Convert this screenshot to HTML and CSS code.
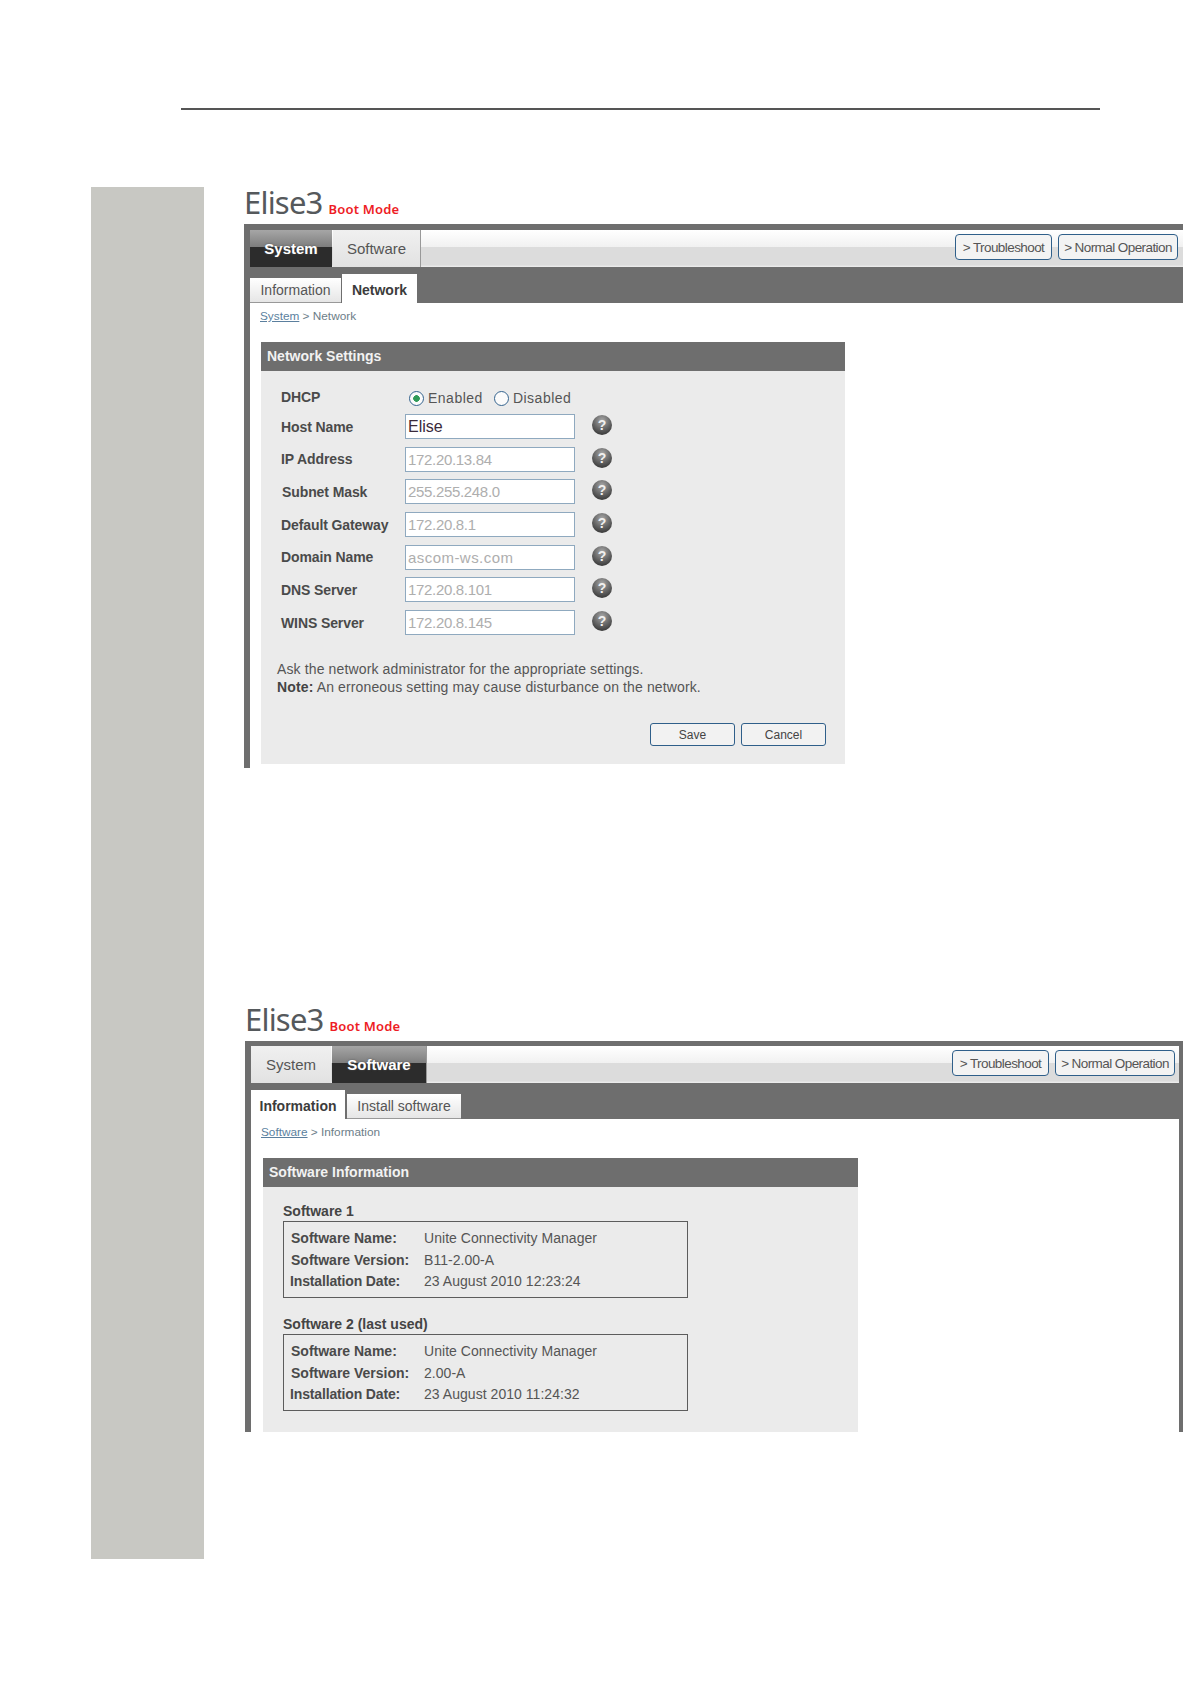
FILE: index.html
```html
<!DOCTYPE html>
<html lang="en">
<head>
<meta charset="utf-8">
<title>Elise3 Boot Mode</title>
<link rel="stylesheet" href="styles.css">
</head>
<body>
<hr class="rule">
<div class="layout">
  <aside class="sidebar"></aside>
  <main class="main">
    <section class="shot shot-one">
      <h2 class="brand"><span class="brand-name">Elise3</span><span class="brand-mode">Boot Mode</span></h2>
      <div class="frame">
        <div class="menubar">
          <a class="tab tab-active tab-system">System</a>
          <a class="tab tab-software tab-edge">Software</a>
          <div class="actions">
            <a class="action action-trouble">&gt; Troubleshoot</a>
            <a class="action action-normal">&gt; Normal Operation</a>
          </div>
        </div>
        <div class="subbar">
          <a class="subtab subtab-info">Information</a>
          <a class="subtab subtab-active subtab-net">Network</a>
        </div>
        <p class="crumb"><a class="crumb-link">System</a> &gt; Network</p>
        <div class="panel panel-net">
          <h3 class="panel-title">Network Settings</h3>
          <div class="panel-body">
            <div class="form">
              <span class="label label-dhcp">DHCP</span>
              <div class="radios">
                <span class="radio radio-on"></span><span class="radio-text">Enabled</span>
                <span class="radio radio-second"></span><span class="radio-text">Disabled</span>
              </div>
              <span></span>

              <span class="label">Host Name</span>
              <span class="field field-on">Elise</span>
              <span class="help">?</span>

              <span class="label">IP Address</span>
              <span class="field">172.20.13.84</span>
              <span class="help">?</span>

              <span class="label label-nudge">Subnet Mask</span>
              <span class="field">255.255.248.0</span>
              <span class="help">?</span>

              <span class="label">Default Gateway</span>
              <span class="field">172.20.8.1</span>
              <span class="help">?</span>

              <span class="label">Domain Name</span>
              <span class="field field-text">ascom-ws.com</span>
              <span class="help">?</span>

              <span class="label">DNS Server</span>
              <span class="field">172.20.8.101</span>
              <span class="help">?</span>

              <span class="label">WINS Server</span>
              <span class="field">172.20.8.145</span>
              <span class="help">?</span>
            </div>
            <p class="note">Ask the network administrator for the appropriate settings.<br><b>Note:</b> An erroneous setting may cause disturbance on the network.</p>
            <div class="form-buttons">
              <a class="button">Save</a>
              <a class="button">Cancel</a>
            </div>
          </div>
        </div>
      </div>
    </section>

    <section class="shot shot-two">
      <h2 class="brand"><span class="brand-name">Elise3</span><span class="brand-mode">Boot Mode</span></h2>
      <div class="frame frame-closed">
        <div class="menubar">
          <a class="tab tab-system2">System</a>
          <a class="tab tab-active tab-software2">Software</a>
          <div class="actions">
            <a class="action action-trouble">&gt; Troubleshoot</a>
            <a class="action action-normal">&gt; Normal Operation</a>
          </div>
        </div>
        <div class="subbar">
          <a class="subtab subtab-active subtab-info2">Information</a>
          <a class="subtab subtab-install">Install software</a>
        </div>
        <p class="crumb crumb-two"><a class="crumb-link">Software</a> &gt; Information</p>
        <div class="panel panel-soft">
          <h3 class="panel-title">Software Information</h3>
          <div class="panel-body panel-body-soft">
            <h4 class="group-title">Software 1</h4>
            <dl class="group">
              <dt class="key">Software Name:</dt><dd class="value">Unite Connectivity Manager</dd>
              <dt class="key">Software Version:</dt><dd class="value">B11-2.00-A</dd>
              <dt class="key key-out">Installation Date:</dt><dd class="value">23 August 2010 12:23:24</dd>
            </dl>
            <h4 class="group-title group-title-next">Software 2 (last used)</h4>
            <dl class="group">
              <dt class="key">Software Name:</dt><dd class="value">Unite Connectivity Manager</dd>
              <dt class="key">Software Version:</dt><dd class="value">2.00-A</dd>
              <dt class="key key-out">Installation Date:</dt><dd class="value">23 August 2010 11:24:32</dd>
            </dl>
          </div>
        </div>
      </div>
    </section>
  </main>
</div>
</body>
</html>
```
FILE: styles.css
```css
* { box-sizing: border-box; }
html, body { margin: 0; padding: 0; background: #fff; }
body { font-family: "Liberation Sans", Arial, sans-serif; color: #444; height: 1684px; overflow: hidden; }

.rule { margin: 108px 0 0 181px; width: 919px; height: 2px; border: 0; background: #555; }

.layout { display: flex; margin-top: 77px; padding-left: 91px; }
.sidebar { width: 113px; height: 1372px; background: #c8c8c3; flex: none; }
.main { flex: 1; min-width: 0; }

.shot-one { margin-left: 40px; width: 939px; }
.shot-two { margin-left: 41px; width: 938px; margin-top: 236px; }

.brand { margin: 0; height: 37px; display: flex; align-items: baseline; font-weight: 400; white-space: nowrap; }
.brand-name { font-family: "Noto Sans", sans-serif; font-size: 31px; line-height: 30px; color: #55595c; letter-spacing: -0.8px; }
.brand-mode { font-family: "Noto Sans", sans-serif; font-weight: 600; font-size: 13px; color: #ee1c25; margin-left: 6px; letter-spacing: 0.2px; }

.frame { border-top: 6px solid #6e6e6e; border-left: 6px solid #6e6e6e; height: 544px; background: #fff; }
.frame-closed { border-top-width: 5px; border-right: 4px solid #6e6e6e; height: 391px; }

.menubar { display: flex; height: 37px; background: linear-gradient(#fff 0, #f1f1f1 46%, #dcdcdc 47%, #dcdcdc 94%, #efefef 100%); }
.tab { display: flex; align-items: center; justify-content: center; font-size: 15px; color: #555; background: linear-gradient(#f0f0f0, #e2e2e2); }
.tab-active { color: #fff; font-weight: 700; background: linear-gradient(#a6a6a6 0, #7d7d7d 47%, #2c2c2c 47%, #2c2c2c 100%); text-shadow: 0 0 2px #555; }
.tab-system { width: 82px; margin-right: 1px; }
.tab-software { width: 88px; }
.tab-edge { border-right: 1px solid #999; }
.tab-system2 { width: 80px; margin-right: 1px; }
.tab-software2 { width: 95px; border-right: 1px solid #999; }

.actions { margin-left: auto; display: flex; gap: 6px; padding: 4px 5px 0 0; align-items: flex-start; }
.frame-closed .actions { padding-right: 4px; }
.action { display: flex; align-items: center; justify-content: center; height: 26px; font-size: 13.5px; letter-spacing: -0.58px; color: #555; background: #f3f3f3; border: 1.5px solid #2f5f8a; border-radius: 4px; white-space: nowrap; }
.action-trouble { width: 97px; }
.action-normal { width: 120px; }

.subbar { display: flex; align-items: flex-end; height: 36px; background: #6e6e6e; }
.subtab { display: flex; align-items: center; justify-content: center; font-size: 14px; color: #555; background: linear-gradient(#fff, #e6e6e6); height: 25px; border-bottom: 1px solid #999; }
.subtab-active { background: #fff; color: #3c3c3c; font-weight: 700; height: 29px; border-bottom: 0; padding-top: 2px; }
.subtab-info { width: 91px; margin-right: 1px; }
.subtab-net { width: 75px; }
.subtab-info2 { width: 94px; margin-right: 2px; }
.subtab-install { width: 114px; }

.crumb { margin: 0 0 0 10px; height: 39px; padding-top: 6px; font-size: 11.8px; line-height: 14px; color: #6c7d88; }
.crumb-link { color: #5b7f9e; text-decoration: underline; }

.panel { margin-left: 11px; }
.panel-net { width: 584px; }
.panel-soft { margin-left: 12px; width: 595px; }
.panel-title { margin: 0; height: 29px; padding-left: 6px; background: #6e6e6e; color: #f2f2f2; font-size: 14px; line-height: 29px; font-weight: 700; }
.panel-body { background: #ebebeb; height: 393px; padding: 10.5px 19px 0 20px; }
.panel-body-soft { height: 245px; padding: 15px 0 0 20px; }

.form { display: grid; grid-template-columns: 124px 170px 20px; grid-auto-rows: 25px; column-gap: 0; row-gap: 7.67px; align-items: center; }
.label { font-size: 14px; font-weight: 700; color: #4a4a4a; letter-spacing: -0.1px; white-space: nowrap; }
.label-dhcp { margin-top: 5px; }
.label-nudge { margin-left: 1px; }
.radios { display: flex; align-items: center; margin-top: 8px; font-size: 14px; color: #555; grid-column: 2 / 3; white-space: nowrap; padding-left: 4px; }
.radio { width: 15px; height: 15px; border-radius: 50%; border: 1.5px solid #35648f; background: #fbfbfb; flex: none; display: block; }
.radio-on { background: radial-gradient(circle, #2f9a58 0, #2f9a58 3px, #fbfbfb 3.6px); }
.radio-second { margin-left: 11px; }
.radio-text { margin-left: 4px; letter-spacing: 0.5px; }

.field { display: block; width: 170px; height: 25px; border: 1px solid #8fa9bf; background: #fff; padding-left: 2px; font-size: 15px; line-height: 24px; color: #aeaeae; letter-spacing: -0.32px; }
.field-text { letter-spacing: 0.45px; }
.field-on { color: #3a2a3a; letter-spacing: 0; font-size: 16px; }
.help { justify-self: end; width: 20px; height: 20px; margin-right: -17px; margin-top: -3px; border-radius: 50%; background: radial-gradient(circle at 50% 28%, #a8a8a8 0, #6a6a6a 45%, #222 100%); color: #f0f0f0; font-size: 14px; font-weight: 700; line-height: 20px; text-align: center; }

.note { margin: 26px 0 0 -4px; font-size: 14px; line-height: 17.5px; color: #555; letter-spacing: 0.13px; white-space: nowrap; }
.note b { color: #444; }
.form-buttons { display: flex; justify-content: flex-end; gap: 6px; margin-top: 27px; }
.button { display: flex; align-items: center; justify-content: center; width: 85px; height: 23px; font-size: 12px; color: #444; background: #f2f2f2; border: 1.5px solid #2f5f8a; border-radius: 3px; }

.group-title { margin: 0; font-size: 14px; line-height: 19px; font-weight: 700; color: #444; }
.group-title-next { margin-top: 17px; }
.group { margin: 0; width: 405px; height: 77px; border: 1.5px solid #5c5c5c; display: grid; grid-template-columns: 133px 1fr; grid-auto-rows: 21.7px; padding: 5px 0 0 7px; align-items: center; font-size: 14px; color: #555; }
.key { font-weight: 700; color: #4a4a4a; white-space: nowrap; }
.key-out { margin-left: -1px; letter-spacing: -0.15px; }
.value { margin: 0; letter-spacing: 0.04px; white-space: nowrap; }
```
